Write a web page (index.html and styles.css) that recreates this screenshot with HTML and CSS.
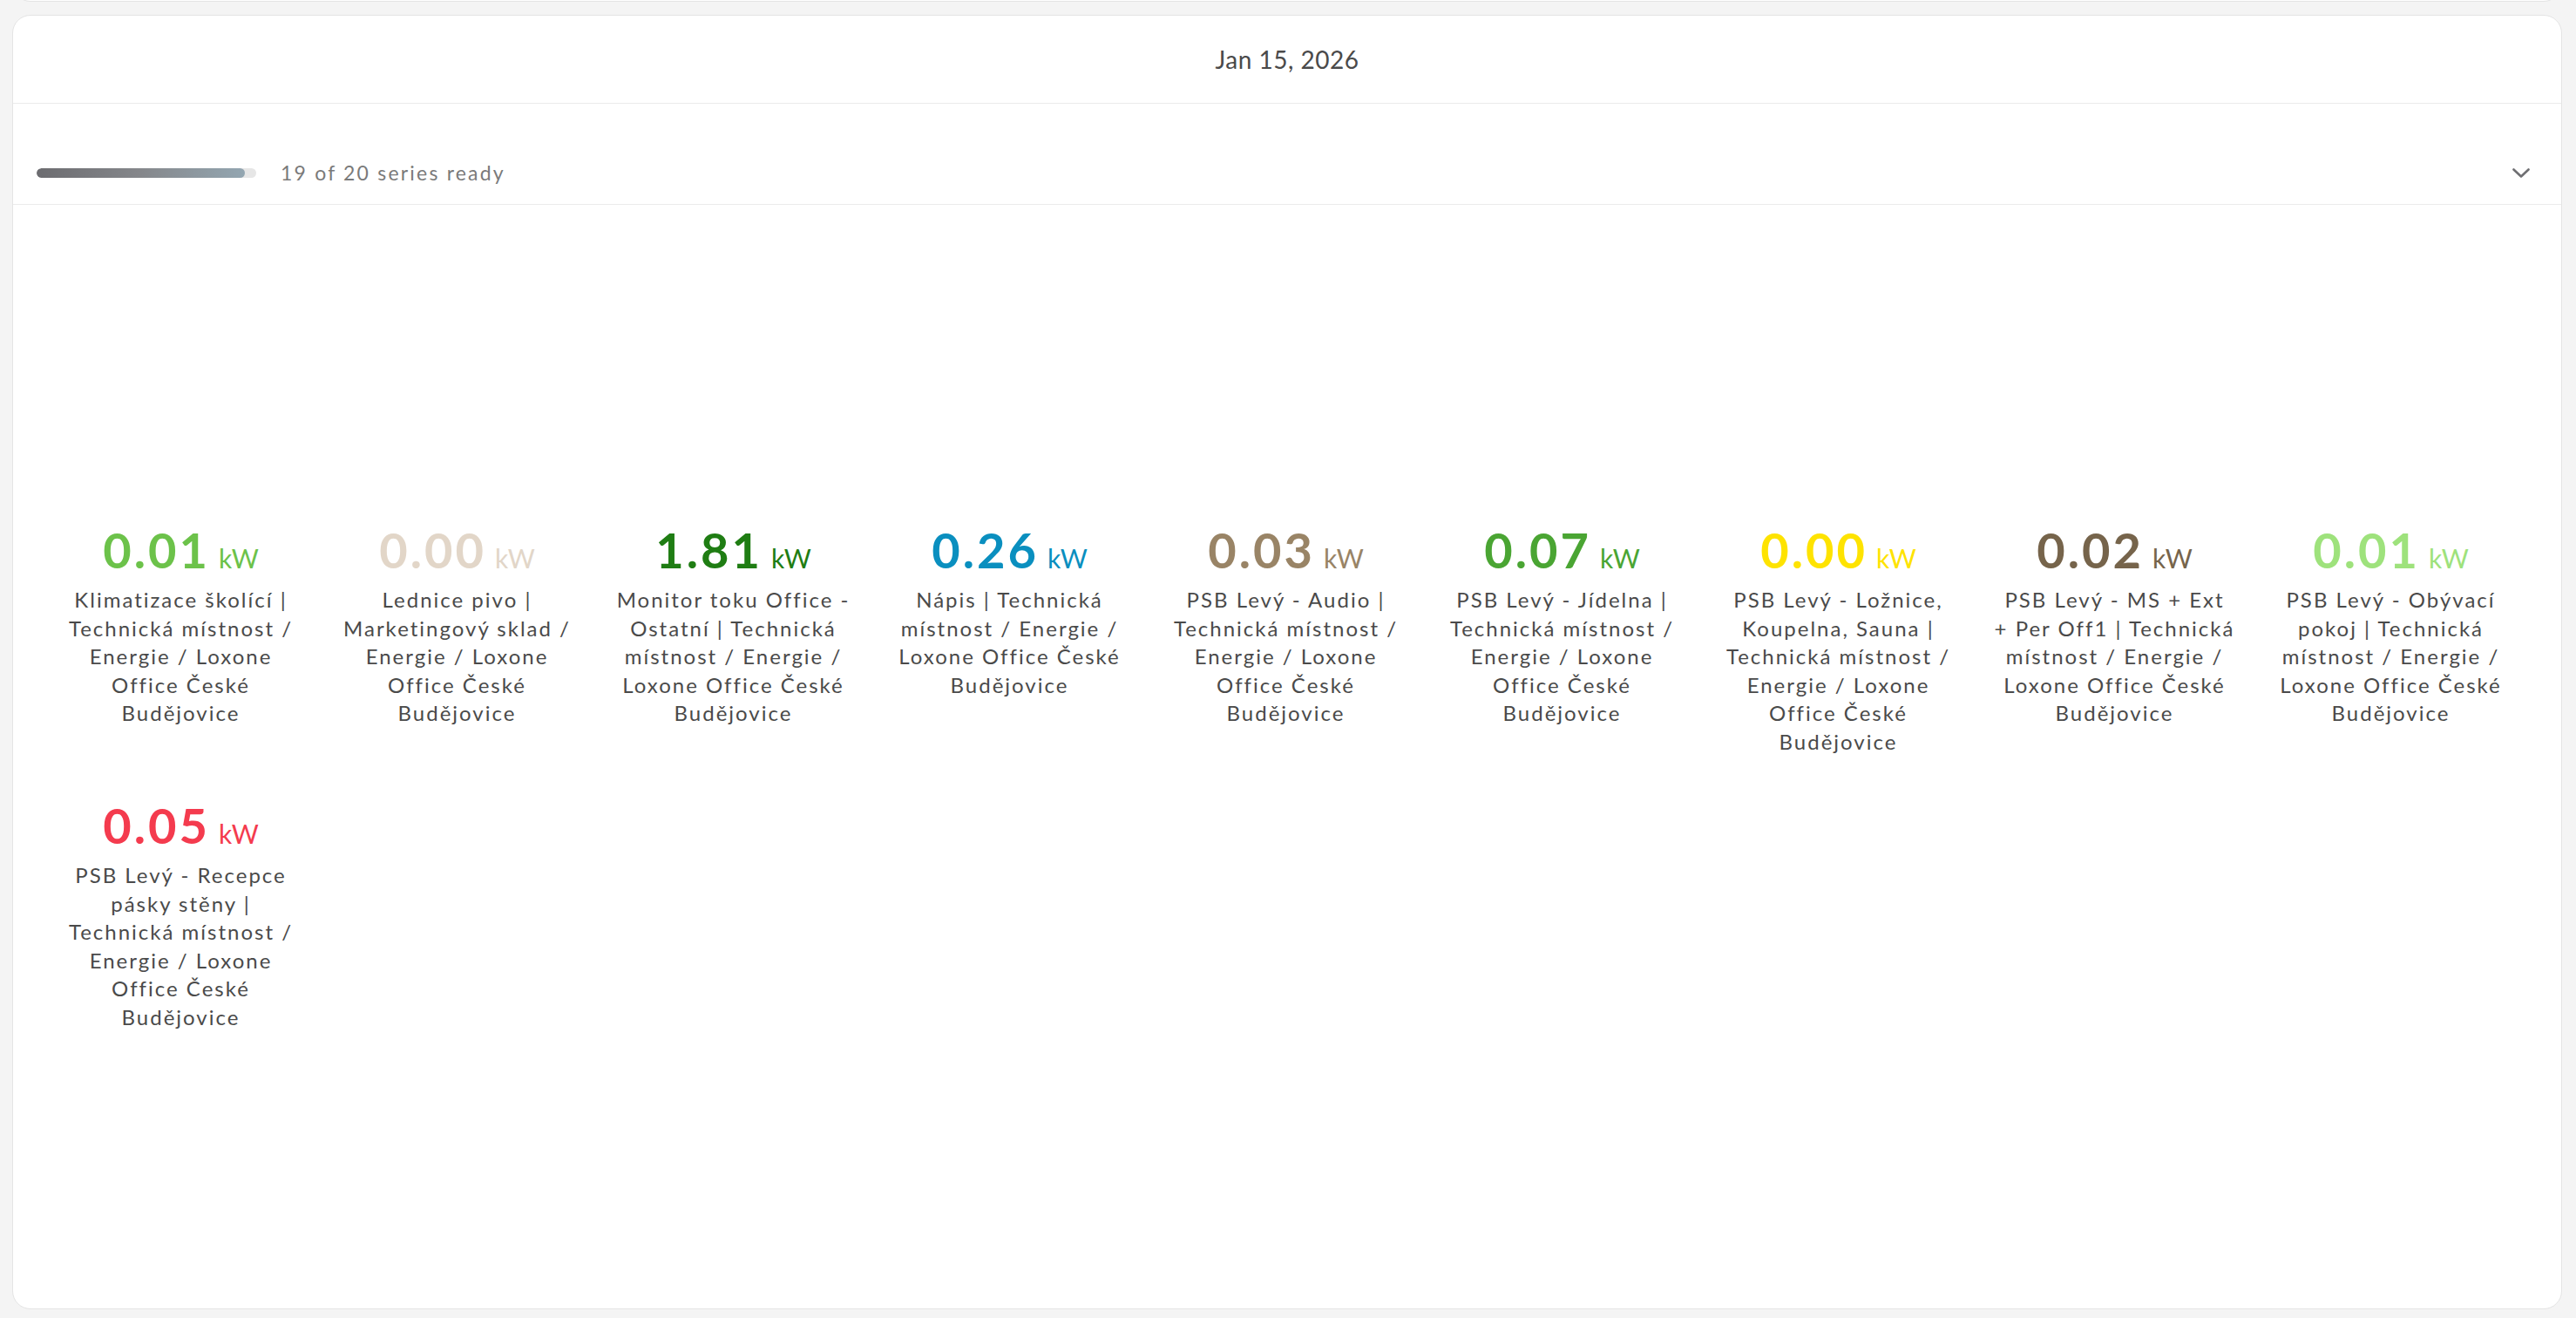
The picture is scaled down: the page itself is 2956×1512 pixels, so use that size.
FILE: index.html
```html
<!DOCTYPE html>
<html>
	<head>
		<meta charset="UTF-8">
		<title>Energie</title>
		<link rel="stylesheet" href="styles.css">
	</head>
	<body>
		<div class="page">
			<!-- konec predchozi karty -->
			<div class="panel panel-prev"></div>

			<div class="panel">
				<div class="panel-date">Jan 15, 2026</div>

				<div class="loading">
					<div class="loading-bar">
						<div class="loading-fill" style="width: 95%"></div>
					</div>
					<span class="loading-text">19 of 20 series ready</span>
					<svg class="chevron" width="20" height="11" viewBox="0 0 20 11">
						<path d="M1.5 1.5 L10 9.5 L18.5 1.5" fill="none" stroke="#6f6f72" stroke-width="2.6" stroke-linecap="round" stroke-linejoin="round"/>
					</svg>
				</div>

				<div class="tiles">
					<div class="tile" style="color: #6cc24a">
						<div class="tile-value"><b>0.01</b><span>kW</span></div>
						<div class="tile-name">Klimatizace školící | Technická místnost / Energie / Loxone Office České Budějovice</div>
					</div>
					<div class="tile" style="color: #e2d6c8">
						<div class="tile-value"><b>0.00</b><span>kW</span></div>
						<div class="tile-name">Lednice pivo | Marketingový sklad / Energie / Loxone Office České Budějovice</div>
					</div>
					<div class="tile" style="color: #1f7d13">
						<div class="tile-value"><b>1.81</b><span>kW</span></div>
						<div class="tile-name">Monitor toku Office - Ostatní | Technická místnost / Energie / Loxone Office České Budějovice</div>
					</div>
					<div class="tile" style="color: #0a8fbf">
						<div class="tile-value"><b>0.26</b><span>kW</span></div>
						<div class="tile-name">Nápis | Technická místnost / Energie / Loxone Office České Budějovice</div>
					</div>
					<div class="tile" style="color: #998466">
						<div class="tile-value"><b>0.03</b><span>kW</span></div>
						<div class="tile-name">PSB Levý - Audio | Technická místnost / Energie / Loxone Office České Budějovice</div>
					</div>
					<div class="tile" style="color: #4aa533">
						<div class="tile-value"><b>0.07</b><span>kW</span></div>
						<div class="tile-name">PSB Levý - Jídelna | Technická místnost / Energie / Loxone Office České Budějovice</div>
					</div>
					<div class="tile" style="color: #fee300">
						<div class="tile-value"><b>0.00</b><span>kW</span></div>
						<div class="tile-name">PSB Levý - Ložnice, Koupelna, Sauna | Technická místnost / Energie / Loxone Office České Budějovice</div>
					</div>
					<div class="tile" style="color: #76644b">
						<div class="tile-value"><b>0.02</b><span>kW</span></div>
						<div class="tile-name">PSB Levý - MS + Ext +&nbsp;Per Off1 | Technická místnost / Energie / Loxone Office České Budějovice</div>
					</div>
					<div class="tile" style="color: #9ee27c">
						<div class="tile-value"><b>0.01</b><span>kW</span></div>
						<div class="tile-name">PSB Levý - Obývací pokoj | Technická místnost / Energie / Loxone Office České Budějovice</div>
					</div>
					<div class="tile" style="color: #f43b4e">
						<div class="tile-value"><b>0.05</b><span>kW</span></div>
						<div class="tile-name">PSB Levý - Recepce pásky stěny | Technická místnost / Energie / Loxone Office České Budějovice</div>
					</div>
				</div>
			</div>
		</div>
	</body>
</html>
```

FILE: styles.css
```css
*{
	margin: 0;
	padding: 0;
	box-sizing: border-box;
}
body{
	background-color: #f4f4f4;
	font-family: Lato, "Liberation Sans", sans-serif;
	color: #4a4a4a;
}
.page{
	height: 100vh;
	padding: 0 16px 10px 14px;
	display: flex;
	flex-direction: column;
}
.panel{
	background-color: #fff;
	border: 1px solid #e4e4e4;
	border-radius: 21px;
	flex: 1;
	display: flex;
	flex-direction: column;
	/*obsah nesmi pretect pres zaobleni*/
	overflow: hidden;
}
/*spodni okraj karty nad touto*/
.panel-prev{
	flex: none;
	height: 30px;
	margin-top: -28px;
	margin-bottom: 15px;
	border-radius: 0 0 21px 21px;
}

.panel-date{
	height: 101px;
	line-height: 100px;
	text-align: center;
	font-size: 28px;
	letter-spacing: 0.5px;
	border-bottom: 1px solid #ebebeb;
}

.loading{
	display: flex;
	align-items: center;
	padding: 64px 36px 21px 27px;
	line-height: 30px;
	border-bottom: 1px solid #ebebeb;
}
.loading-bar{
	width: 252px;
	height: 11px;
	border-radius: 6px;
	background-color: #e6e6e6;
	overflow: hidden;
}
.loading-fill{
	height: 100%;
	border-radius: 6px;
	background: linear-gradient(90deg, #6c6c70, #85878b 50%, #93a6b1);
}
.loading-text{
	margin-left: 28px;
	font-size: 23px;
	letter-spacing: 2.2px;
	color: #7a7a7a;
	flex: 1;
}
.chevron{
	display: block;
}

.tiles{
	display: flex;
	flex-wrap: wrap;
	align-content: flex-start;
	row-gap: 48px;
	padding: 364px 36px 0 34px;
}
.tile{
	width: 317px;
	padding: 0 18px;
	text-align: center;
}
.tile-value{
	height: 64px;
	line-height: 64px;
	white-space: nowrap;
}
.tile-value b{
	font-size: 56px;
	font-weight: 700;
	letter-spacing: 3px;
}
.tile-value span{
	margin-left: 10px;
	font-size: 30px;
}
.tile-name{
	margin-top: 9px;
	font-size: 24px;
	line-height: 32.5px;
	letter-spacing: 2px;
	color: #4a4a4a;
}
```
